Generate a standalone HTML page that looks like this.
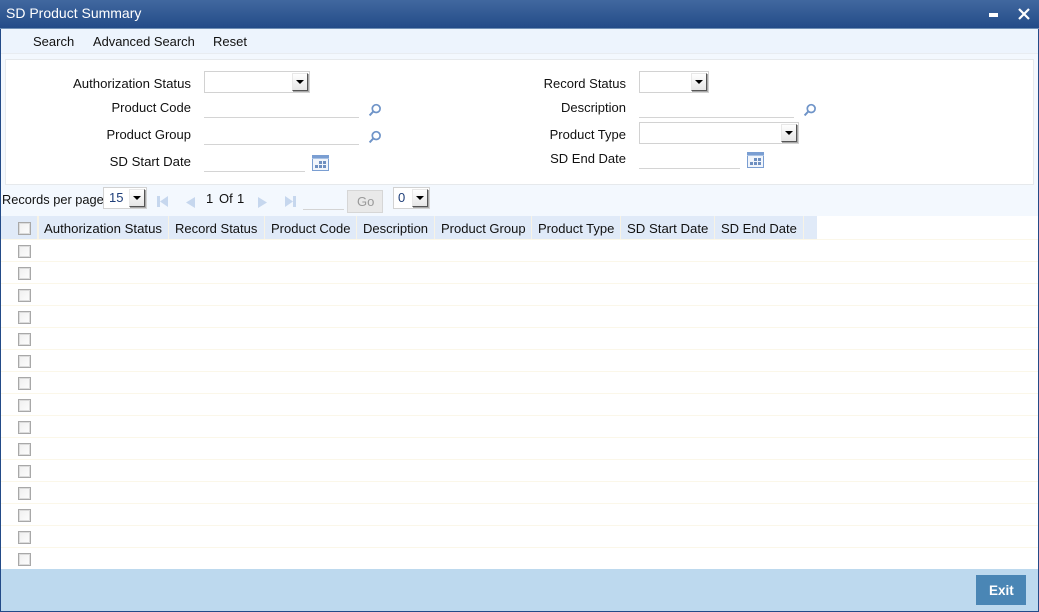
<!DOCTYPE html>
<html><head><meta charset="utf-8"><title>SD Product Summary</title>
<style>
html,body{margin:0;padding:0;background:#fff}
#p{position:relative;width:1039px;height:612px;overflow:hidden;background:#fff;font-family:"Liberation Sans",Arial,sans-serif;font-size:13px;color:#111}
#p div,#p span.t{position:absolute}
.t{white-space:nowrap;line-height:18px}
.r{text-align:right}
.w{font-size:13.2px}
.ul{height:1px;background:#d4d4d4}
.sel{box-sizing:border-box;border:1px solid #d2d2d2;background:#fff;height:22px}
.btn{box-sizing:border-box;width:16px;height:18px;top:1px;right:1px;background:linear-gradient(#fff,#e6e6e6);border-top:1px solid #e8e8e8;border-left:1px solid #e8e8e8;border-right:1px solid #555;border-bottom:1px solid #555;box-shadow:1px 1px 0 #a8a8a8}
.btn i{position:absolute;left:3px;top:6px;width:0;height:0;border-left:4px solid transparent;border-right:4px solid transparent;border-top:4px solid #000}
.cb{box-sizing:border-box;width:13px;height:13px;left:18px;border:1px solid #a8a8a8;background:linear-gradient(135deg,#efefef,#fdfdfd);box-shadow:inset 0 0 0 1px #dcdcdc}
.ln{left:1px;width:1037px;height:1px;background:#fbf7e9}
.sep{top:216px;width:1px;height:23px;background:#f7f3e6}
svg{position:absolute;display:block}
</style></head><body><div id="p">
<div style="left:0;top:0;width:1039px;height:29px;background:linear-gradient(#41689f,#234b88);border-bottom:1px solid #6f8fb5;box-sizing:border-box"></div>
<span class="t" style="left:6px;top:5px;color:#fff;font-size:14px;line-height:16px">SD Product Summary</span>
<div style="left:989px;top:13px;width:9px;height:4px;background:#fff"></div>
<svg style="left:1018px;top:8px" width="12" height="12" viewBox="0 0 12 12"><path d="M1 1L11 11M11 1L1 11" stroke="#fff" stroke-width="2.2" fill="none"/></svg>

<div style="left:1px;top:29px;width:1037px;height:25px;background:#edf4fd;border-bottom:1px solid #e8ecf1;box-sizing:border-box"></div>
<span class="t" style="left:33px;top:33px">Search</span>
<span class="t" style="left:93px;top:33px;font-size:12.9px">Advanced Search</span>
<span class="t" style="left:213px;top:33px">Reset</span>

<div style="left:1px;top:54px;width:1037px;height:162px;background:#f3f8fe"></div>
<div style="left:5px;top:59px;width:1029px;height:126px;box-sizing:border-box;background:#fff;border:1px solid #e6e9ec"></div>

<span class="t r w" style="right:848px;top:75px">Authorization Status</span>
<span class="t r" style="right:848px;top:99px">Product Code</span>
<span class="t r" style="right:848px;top:126px">Product Group</span>
<span class="t r w" style="right:848px;top:153px">SD Start Date</span>
<span class="t r" style="right:413px;top:75px">Record Status</span>
<span class="t r" style="right:413px;top:99px">Description</span>
<span class="t r" style="right:413px;top:126px">Product Type</span>
<span class="t r" style="right:413px;top:150px">SD End Date</span>

<div class="sel" style="left:204px;top:71px;width:106px"><div class="btn"><i></i></div></div>
<div class="ul" style="left:204px;top:117px;width:155px"></div>
<div class="ul" style="left:204px;top:144px;width:155px"></div>
<div class="ul" style="left:204px;top:171px;width:101px"></div>

<div class="sel" style="left:639px;top:71px;width:70px"><div class="btn"><i></i></div></div>
<div class="ul" style="left:639px;top:117px;width:155px"></div>
<div class="sel" style="left:639px;top:122px;width:160px"><div class="btn"><i></i></div></div>
<div class="ul" style="left:639px;top:168px;width:101px"></div>

<svg style="left:368px;top:103px" width="14" height="14" viewBox="0 0 14 14"><circle cx="8.200" cy="5.600" r="3.900" fill="none" stroke="#6f94c8" stroke-width="1.700"/><path d="M5.200 8.600L1.600 12.400" stroke="#6f94c8" stroke-width="2" fill="none"/></svg>
<svg style="left:368px;top:130px" width="14" height="14" viewBox="0 0 14 14"><circle cx="8.200" cy="5.600" r="3.900" fill="none" stroke="#6f94c8" stroke-width="1.700"/><path d="M5.200 8.600L1.600 12.400" stroke="#6f94c8" stroke-width="2" fill="none"/></svg>
<svg style="left:803px;top:103px" width="14" height="14" viewBox="0 0 14 14"><circle cx="8.200" cy="5.600" r="3.900" fill="none" stroke="#6f94c8" stroke-width="1.700"/><path d="M5.200 8.600L1.600 12.400" stroke="#6f94c8" stroke-width="2" fill="none"/></svg>

<svg style="left:312px;top:155px" width="17" height="16" viewBox="0 0 17 16"><rect width="17" height="16" fill="#7a9ed2"/><rect y="3" width="17" height="1" fill="#a9c2e4"/><rect x="1" y="4" width="15" height="11" fill="#f1f5fb"/><path d="M7 6h3v3H7zM11 6h3v3h-3zM3 10h3v3H3zM7 10h3v3H7zM11 10h3v3h-3z" fill="#6e8fc0"/></svg>
<svg style="left:747px;top:152px" width="17" height="16" viewBox="0 0 17 16"><rect width="17" height="16" fill="#7a9ed2"/><rect y="3" width="17" height="1" fill="#a9c2e4"/><rect x="1" y="4" width="15" height="11" fill="#f1f5fb"/><path d="M7 6h3v3H7zM11 6h3v3h-3zM3 10h3v3H3zM7 10h3v3H7zM11 10h3v3h-3z" fill="#6e8fc0"/></svg>

<span class="t" style="left:2px;top:191px;font-size:12.8px">Records per page</span>
<div class="sel" style="left:103px;top:187px;width:44px"><span class="t" style="left:5px;top:1px;color:#1f3f7a">15</span><div class="btn"><i></i></div></div>
<svg style="left:157px;top:195px" width="12" height="13" viewBox="0 0 12 13"><path d="M0 1h3v11H0zM11 1v11L3 6.500z" fill="#c6d7ee"/></svg>
<svg style="left:186px;top:197px" width="10" height="11" viewBox="0 0 10 11"><path d="M9 0v11L0 5.500z" fill="#c6d7ee"/></svg>
<span class="t" style="left:206px;top:190px">1</span>
<span class="t" style="left:219px;top:190px">Of</span>
<span class="t" style="left:237px;top:190px">1</span>
<svg style="left:257px;top:197px" width="10" height="11" viewBox="0 0 10 11"><path d="M1 0v11l9-5.500z" fill="#c6d7ee"/></svg>
<svg style="left:285px;top:195px" width="12" height="13" viewBox="0 0 12 13"><path d="M0 1v11l8-5.500zM8 1h3v11H8z" fill="#c6d7ee"/></svg>
<div class="ul" style="left:303px;top:209px;width:41px"></div>
<div style="left:347px;top:190px;width:36px;height:23px;box-sizing:border-box;background:#e9e9e9;border:1px solid #d6d6d6"></div>
<span class="t" style="left:357px;top:193px;color:#9a9a9a">Go</span>
<div class="sel" style="left:393px;top:187px;width:37px"><span class="t" style="left:4px;top:1px;color:#1f3f7a">0</span><div class="btn"><i></i></div></div>

<div style="left:1px;top:216px;width:816px;height:23px;background:#e0eaf8"></div>
<div class="sep" style="left:37px;width:2px"></div><div class="sep" style="left:168px"></div><div class="sep" style="left:264px"></div><div class="sep" style="left:356px"></div><div class="sep" style="left:434px"></div><div class="sep" style="left:531px"></div><div class="sep" style="left:620px"></div><div class="sep" style="left:714px"></div><div class="sep" style="left:803px"></div>
<span class="t w" style="left:44px;top:220px">Authorization Status</span>
<span class="t" style="left:175px;top:220px">Record Status</span>
<span class="t" style="left:271px;top:220px">Product Code</span>
<span class="t" style="left:363px;top:220px">Description</span>
<span class="t" style="left:441px;top:220px">Product Group</span>
<span class="t" style="left:538px;top:220px">Product Type</span>
<span class="t w" style="left:627px;top:220px">SD Start Date</span>
<span class="t" style="left:721px;top:220px">SD End Date</span>
<div class="cb" style="top:222px"></div>
<div class="ln" style="top:239px"></div>

<div class="cb" style="top:245px"></div><div class="ln" style="top:261px"></div>
<div class="cb" style="top:267px"></div><div class="ln" style="top:283px"></div>
<div class="cb" style="top:289px"></div><div class="ln" style="top:305px"></div>
<div class="cb" style="top:311px"></div><div class="ln" style="top:327px"></div>
<div class="cb" style="top:333px"></div><div class="ln" style="top:349px"></div>
<div class="cb" style="top:355px"></div><div class="ln" style="top:371px"></div>
<div class="cb" style="top:377px"></div><div class="ln" style="top:393px"></div>
<div class="cb" style="top:399px"></div><div class="ln" style="top:415px"></div>
<div class="cb" style="top:421px"></div><div class="ln" style="top:437px"></div>
<div class="cb" style="top:443px"></div><div class="ln" style="top:459px"></div>
<div class="cb" style="top:465px"></div><div class="ln" style="top:481px"></div>
<div class="cb" style="top:487px"></div><div class="ln" style="top:503px"></div>
<div class="cb" style="top:509px"></div><div class="ln" style="top:525px"></div>
<div class="cb" style="top:531px"></div><div class="ln" style="top:547px"></div>
<div class="cb" style="top:553px"></div>

<div style="left:1px;top:569px;width:1037px;height:42px;background:#bdd9ee"></div>
<div style="left:976px;top:575px;width:50px;height:30px;background:#4a86b5"></div>
<span class="t" style="left:989px;top:582px;color:#fff;font-weight:bold;font-size:13.5px">Exit</span>

<div style="left:0;top:29px;width:1px;height:583px;background:#234b88"></div>
<div style="left:1038px;top:29px;width:1px;height:583px;background:#234b88"></div>
<div style="left:0;top:611px;width:1039px;height:1px;background:#234b88"></div>
</div></body></html>
